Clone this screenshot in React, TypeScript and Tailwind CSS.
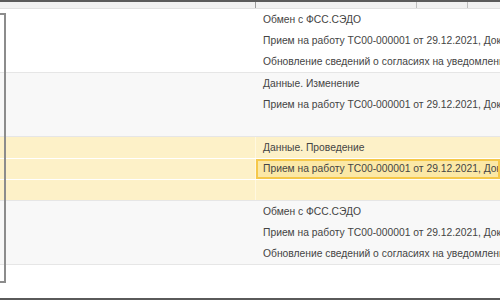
const groups = [
  {
    bg: "bg-white",
    rows: [
      "Обмен с ФСС.СЭДО",
      "Прием на работу ТС00-000001 от 29.12.2021, Документ",
      "Обновление сведений о согласиях на уведомления",
    ],
  },
  {
    bg: "bg-[#f8f8f8]",
    rows: ["Данные. Изменение", "Прием на работу ТС00-000001 от 29.12.2021, Документ", ""],
  },
  {
    bg: "bg-[#fdf1c8]",
    yellow: true,
    rows: ["Данные. Проведение", "Прием на работу ТС00-000001 от 29.12.2021, Документ", ""],
  },
  {
    bg: "bg-[#f8f8f8]",
    rows: [
      "Обмен с ФСС.СЭДО",
      "Прием на работу ТС00-000001 от 29.12.2021, Документ",
      "Обновление сведений о согласиях на уведомления",
    ],
  },
];

export default function App() {
  return (
    <div
      className="relative w-[500px] h-[300px] overflow-hidden bg-white text-[10.3px] text-[#444]"
      style={{ fontFamily: '"Liberation Sans", Arial, sans-serif' }}
    >
      <div className="border-t-2 border-[#5a5a5a]" />
      {/* header strip */}
      <div className="flex h-[7px] bg-[#f0f0f0] border-b border-[#e0e0e0]">
        <div className="w-[256px] border-r border-[#9a9a9a]" />
        <div className="w-[161px] border-r border-[#bdbdbd]" />
        <div className="w-[51px] border-r border-[#bdbdbd]" />
        <div className="flex-1" />
      </div>

      <div className="flex flex-col">
        {groups.map((g, gi) => (
          <div key={gi} className={`${g.bg} border-b border-[#e6e6e6]`}>
            {g.rows.map((r, ri) => {
              const selected = g.yellow && ri === 1;
              return (
                <div
                  key={ri}
                  className={`flex h-[21px] ${g.yellow && ri > 0 ? "border-t border-white" : ""}`}
                >
                  <div className={`w-[256px] shrink-0 ${g.yellow ? "border-r border-[#fff8e0]" : ""}`} />
                  <div
                    className={`flex-1 flex items-center whitespace-nowrap overflow-hidden ${
                      selected ? "bg-[#fbe8a6] border-2 border-[#f5c84a] pl-[5px]" : "pl-[7px]"
                    }`}
                  >
                    {r}
                  </div>
                </div>
              );
            })}
          </div>
        ))}
      </div>

      {/* left frame */}
      <div className="absolute left-0 top-[13px] w-[6px] h-[270px] border-t-2 border-r-2 border-b-2 border-[#8c8c8c]" />

      <div className="absolute left-0 bottom-0 w-full h-[2px] bg-[#5a5a5a]" />
    </div>
  );
}
